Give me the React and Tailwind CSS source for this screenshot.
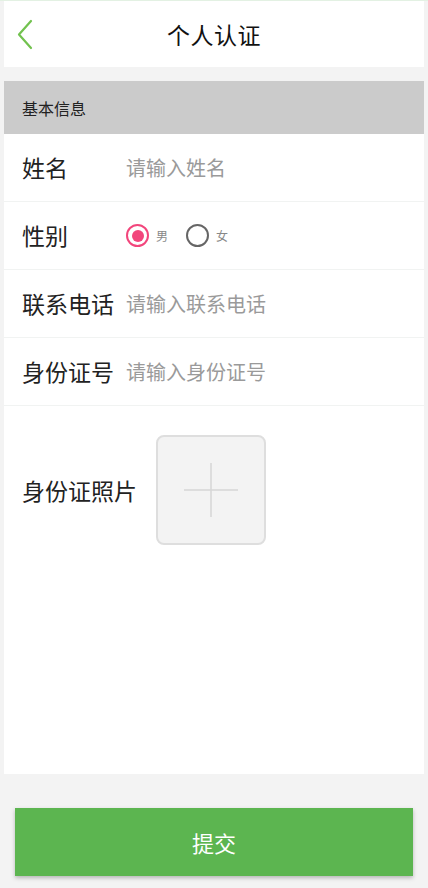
import React, { useState } from 'react';

const font = { fontFamily: '"Noto Sans CJK SC", "Noto Sans", sans-serif' };

const Row = ({ label, placeholder, children }) => (
    <div className="h-[68px] flex items-center pl-[18px] border-b border-[#f1f3f2]">
        <span className="w-[104px] shrink-0 text-[23px] text-[#222] leading-none">{label}</span>
        {children || (
            <input
                className="flex-1 min-w-0 bg-transparent outline-none text-[20px] text-[#333] placeholder:text-[#9a9a9a]"
                placeholder={placeholder}
            />
        )}
    </div>
);

const Radio = ({ checked, label, onClick }) => (
    <button onClick={onClick} className="flex items-center mr-[18px]">
        {checked ? (
            <span className="w-[23px] h-[23px] rounded-full border-[2.5px] border-[#f2467c] flex items-center justify-center">
                <span className="w-[12px] h-[12px] rounded-full bg-[#f2467c]" />
            </span>
        ) : (
            <span className="w-[23px] h-[23px] rounded-full border-[2.5px] border-[#666]" />
        )}
        <span className="ml-[7px] text-[12px] text-[#888]">{label}</span>
    </button>
);

const App = () => {
    const [gender, setGender] = useState('male');

    return (
        <div className="h-[888px] bg-[#f3f3f3] px-[4px] flex flex-col border-t border-[#e3f1e3]" style={font}>
            {/* header */}
            <div className="h-[66px] bg-white relative flex items-center justify-center">
                <svg className="absolute left-[12px] top-[18px]" width="24" height="32" viewBox="0 0 24 32" fill="none">
                    <path d="M15 2 L3 15.5 L15 29" stroke="#72c24f" strokeWidth="2.2" strokeLinecap="round" strokeLinejoin="round" />
                </svg>
                <h1 className="text-[23px] text-[#111] tracking-[0.5px]">个人认证</h1>
            </div>

            <div className="h-[14px]" />

            <div className="h-[53px] bg-[#cbcbcb] flex items-center pl-[18px]">
                <span className="text-[16px] text-[#222]">基本信息</span>
            </div>

            <div className="flex-1 bg-white flex flex-col">
                <Row label="姓名" placeholder="请输入姓名" />
                <Row label="性别">
                    <div className="flex items-center">
                        <Radio checked={gender === 'male'} label="男" onClick={() => setGender('male')} />
                        <Radio checked={gender === 'female'} label="女" onClick={() => setGender('female')} />
                    </div>
                </Row>
                <Row label="联系电话" placeholder="请输入联系电话" />
                <Row label="身份证号" placeholder="请输入身份证号" />

                <div className="flex items-center pl-[18px] pt-[29px]">
                    <span className="w-[134px] shrink-0 text-[23px] text-[#222]">身份证照片</span>
                    <div className="w-[110px] h-[110px] rounded-[8px] border-2 border-[#dedede] bg-[#f3f3f3] flex items-center justify-center">
                        <svg width="54" height="54" viewBox="0 0 54 54">
                            <path d="M27 0 V54 M0 27 H54" stroke="#d6d6d6" strokeWidth="1.5" />
                        </svg>
                    </div>
                </div>
            </div>

            {/* footer */}
            <div className="h-[114px] pt-[34px] px-[11px]">
                <button className="w-full h-[68px] bg-[#5cb550] text-white text-[22px] shadow-[0_2px_4px_rgba(0,0,0,0.25)]">
                    提交
                </button>
            </div>
        </div>
    );
};

export default App;
